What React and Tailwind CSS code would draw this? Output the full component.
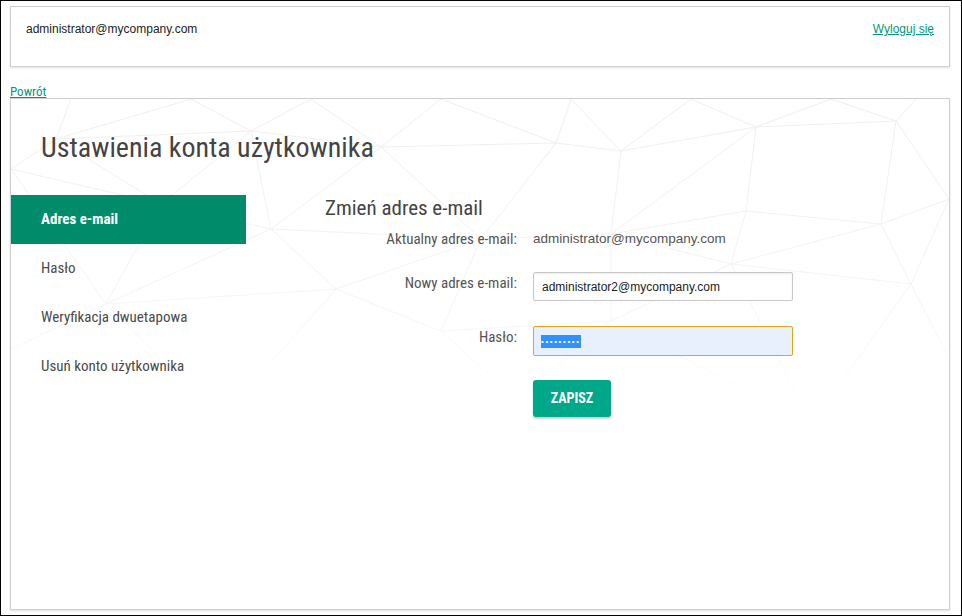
const narrow = { fontFamily: '"Liberation Sans Narrow", "Roboto Condensed", Roboto, sans-serif' };

const pts = {
  a1: [60, 0], a2: [180, 0], a3: [300, 0], a4: [430, 0], a5: [560, 0], a6: [680, 0], a7: [820, 0], a8: [905, 0],
  b1: [45, 40], b2: [240, 32], b3: [370, 48], b4: [545, 44], b5: [610, 52], b6: [745, 28], b7: [885, 22],
  c1: [0, 70], c2: [150, 105], c3: [260, 130], c4: [470, 140], c5: [600, 135], c6: [735, 112], c7: [870, 125], c8: [938, 100],
  d1: [95, 205], d2: [325, 190], d3: [430, 232], d4: [600, 222], d5: [720, 165], d6: [900, 185],
  e1: [0, 250], e2: [210, 320], e3: [505, 300], e4: [800, 325], e5: [938, 260],
};

const edges = [
  "a1-b1", "a2-b1", "a2-b2", "a3-b2", "a3-b3", "a4-b3", "a4-b4", "a5-b4", "a5-b5", "a6-b5", "a6-b6", "a7-b6", "a7-b7", "a8-b7",
  "b1-b2", "b2-b3", "b3-b4", "b4-b5", "b5-b6", "b6-b7",
  "c1-b1", "b1-c2", "b2-c2", "b2-c3", "b3-c3", "b3-c4", "b4-c4", "b5-c5", "b6-c5", "b6-c6", "b7-c7", "b7-c8",
  "c1-c2", "c2-c3", "c3-c4", "c4-c5", "c5-c6", "c6-c7", "c7-c8",
  "c1-d1", "c2-d1", "c3-d1", "c3-d2", "c4-d2", "c4-d3", "c5-d4", "c5-d5", "c6-d5", "c7-d5", "c7-d6", "c8-d6",
  "d1-d2", "d2-d3", "d3-d4", "d4-d5", "d5-d6",
  "e1-d1", "d1-e2", "d2-e2", "d3-e3", "d4-e3", "d4-e4", "d5-e4", "d6-e4", "d6-e5",
];

function Mesh() {
  return (
    <svg className="pointer-events-none absolute left-0 top-0" width="938" height="340" viewBox="0 0 938 340">
      <defs>
        <linearGradient id="fade" x1="0" y1="0" x2="0" y2="340" gradientUnits="userSpaceOnUse">
          <stop offset="0" stopColor="#eeeeee" />
          <stop offset="0.55" stopColor="#f4f4f4" />
          <stop offset="1" stopColor="#ffffff" />
        </linearGradient>
      </defs>
      <g stroke="url(#fade)" strokeWidth="1" fill="none">
        {edges.map((e) => {
          const [p, q] = e.split("-");
          return <line key={e} x1={pts[p][0]} y1={pts[p][1]} x2={pts[q][0]} y2={pts[q][1]} />;
        })}
      </g>
    </svg>
  );
}

const menu = ["Adres e-mail", "Hasło", "Weryfikacja dwuetapowa", "Usuń konto użytkownika"];

export default function App() {
  return (
    <div className="h-[616px] w-[962px] overflow-hidden border border-black bg-white" style={{ fontFamily: '"Liberation Sans", Arial, sans-serif' }}>
      {/* top bar */}
      <div className="ml-[9px] mr-[11px] mt-[5px] flex h-[61px] items-start justify-between border border-[#cfcfcf] bg-white pl-[15px] pr-[15px] pt-[13px] shadow-[0_1px_2px_rgba(0,0,0,0.12)]">
        <span className="text-[12px] text-[#222]">administrator@mycompany.com</span>
        <a href="#" className="text-[12px] text-[#009982] underline">Wyloguj się</a>
      </div>

      <div className="ml-[9px] mt-[16px] h-[15px] leading-[15px]">
        <a href="#" className="text-[13px] text-[#009982] underline" style={narrow}>Powrót</a>
      </div>

      {/* main card */}
      <div className="relative ml-[9px] mr-[11px] h-[512px] border border-[#cfcfcf] bg-white shadow-[0_1px_2px_rgba(0,0,0,0.12)]">
        <Mesh />
        <div className="relative">
          <h1 className="pl-[30px] pt-[29px] text-[28px] leading-[40px] text-[#444]" style={narrow}>
            Ustawienia konta użytkownika
          </h1>

          <div className="mt-[27px] flex">
            <nav className="w-[235px]" style={narrow}>
              {menu.map((m, i) => (
                <div
                  key={m}
                  className={
                    i === 0
                      ? "flex h-[49px] items-center bg-[#008c6a] pl-[30px] text-[15px] font-bold text-white"
                      : "flex h-[49px] items-center pl-[30px] text-[15px] text-[#4a4a4a]"
                  }
                >
                  {m}
                </div>
              ))}
            </nav>

            <div className="ml-[79px] pt-[1px]">
              <h2 className="text-[21px] leading-[24px] text-[#444]" style={narrow}>Zmień adres e-mail</h2>

              <div className="mt-[9px] flex">
                <div className="w-[192px] text-right text-[15px] leading-[20px] text-[#555]" style={narrow}>Aktualny adres e-mail:</div>
                <div className="ml-[16px] text-[13.5px] leading-[20px] text-[#555]">administrator@mycompany.com</div>
              </div>

              <div className="mt-[23px] flex">
                <div className="w-[192px] pt-[1px] text-right text-[15px] leading-[20px] text-[#555]" style={narrow}>Nowy adres e-mail:</div>
                <div className="ml-[16px] flex h-[29px] w-[260px] items-center rounded-[2px] border border-[#c8c8c8] bg-white pl-[8px] text-[12px] text-[#222] shadow-[inset_0_1px_2px_rgba(0,0,0,0.08)]">
                  administrator2@mycompany.com
                </div>
              </div>

              <div className="mt-[25px] flex">
                <div className="w-[192px] pt-[1px] text-right text-[15px] leading-[20px] text-[#555]" style={narrow}>Hasło:</div>
                <div className="ml-[16px] flex h-[30px] w-[260px] items-center rounded-[2px] border border-[#e6a60c] bg-[#e8f0fe] pl-[7px]">
                  <span className="flex h-[13px] w-[40px] items-center bg-[#3390ff] text-[8px] leading-[13px] tracking-[1.6px] text-white">
                    •••••••••
                  </span>
                </div>
              </div>

              <div className="mt-[24px] pl-[208px]">
                <button className="h-[37px] w-[78px] rounded-[3px] bg-[#00a88a] text-[14px] font-bold text-white shadow-[0_2px_2px_rgba(0,0,0,0.2)]" style={narrow}>
                  ZAPISZ
                </button>
              </div>
            </div>
          </div>
        </div>
      </div>
    </div>
  );
}
